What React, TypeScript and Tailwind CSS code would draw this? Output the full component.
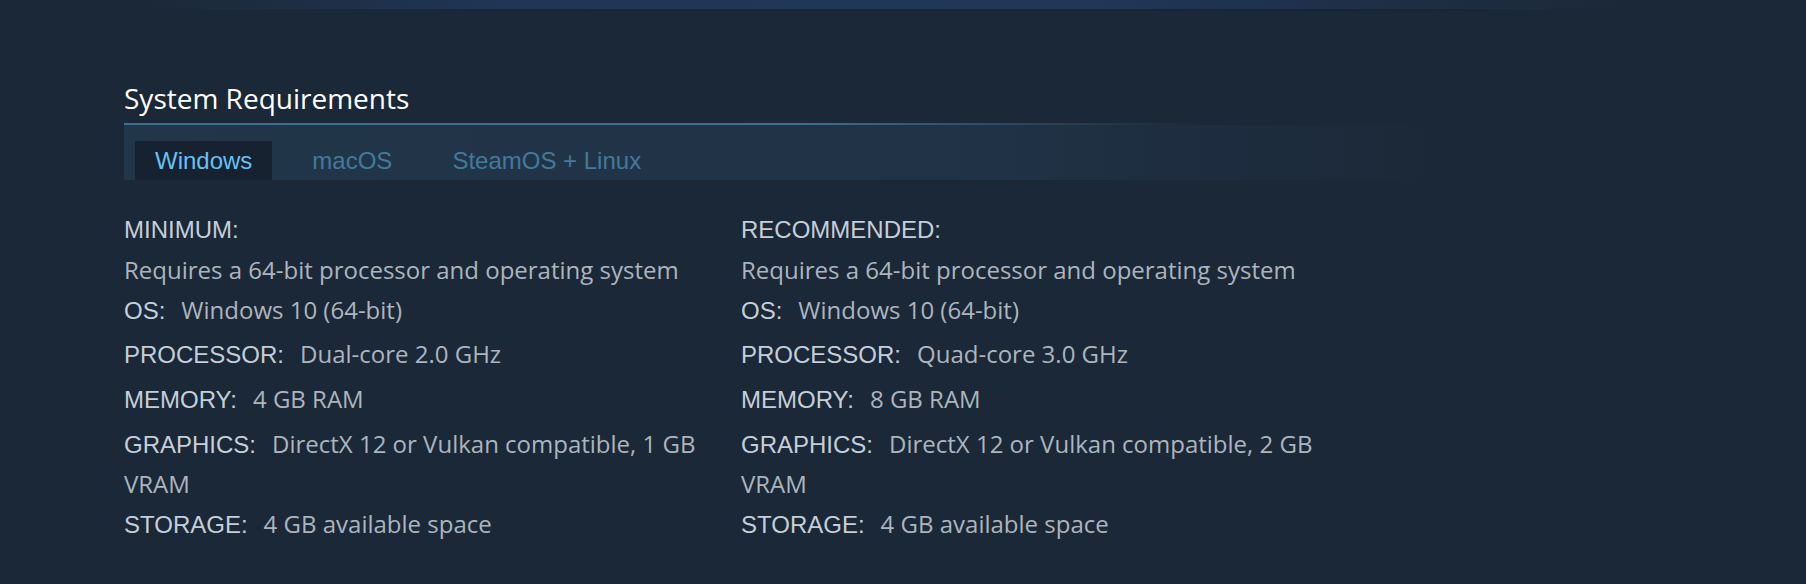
import React from "react";

const Label = ({ children }: { children: React.ReactNode }) => (
  <span className="font-['Liberation_Sans',Arial,sans-serif] text-[24px] leading-[24px] text-[#c4cfd9] mr-[16px]">
    {children}
  </span>
);

function Column({
  heading,
  specs,
}: {
  heading: string;
  specs: { os: string; cpu: string; mem: string; gpu: string; storage: string };
}) {
  return (
    <div className="font-['Open_Sans',sans-serif] text-[24px] leading-[40px] text-[#acb5be]">
      <div className="h-[40px]">
        <span className="font-['Liberation_Sans',Arial,sans-serif] text-[24px] leading-[24px] text-[#c4cfd9]">
          {heading}
        </span>
      </div>
      <div className="mt-[1px]">
        Requires a 64-bit processor and operating system
        <br />
        <Label>OS:</Label>
        {specs.os}
      </div>
      <div className="mt-[4px]">
        <Label>PROCESSOR:</Label>
        {specs.cpu}
      </div>
      <div className="mt-[5px]">
        <Label>MEMORY:</Label>
        {specs.mem}
      </div>
      <div className="mt-[5px]">
        <Label>GRAPHICS:</Label>
        {specs.gpu}
      </div>
      <div>
        <Label>STORAGE:</Label>
        {specs.storage}
      </div>
    </div>
  );
}

export default function App() {
  return (
    <div className="w-[1806px] h-[584px] bg-[#1b2838] overflow-hidden">
      <div className="h-[9px] bg-[linear-gradient(to_right,rgba(32,54,84,0)_8%,#203654_28%,#213756_60%,rgba(32,54,84,0)_90%)]" />
      <div className="h-[2px] bg-[linear-gradient(to_right,rgba(22,32,46,0)_22%,#172432_35%,#172432_75%,rgba(22,32,46,0)_85%)]" />
      <div className="pl-[124px] pt-[70px]">
        <div className="w-[1316px]">
          <h2 className="font-['Open_Sans',sans-serif] text-[28px] leading-[34px] text-white font-normal">
            System Requirements
          </h2>
          <div className="mt-[8px] h-[2px] bg-[linear-gradient(to_right,#3d6f90_0%,#3d6f90_51%,rgba(61,111,144,0)_82%)]" />
          <div className="h-[55px] pt-[16px] pl-[11px] flex items-start gap-[20px] bg-[linear-gradient(to_right,#223649_0%,#203246_65%,rgba(30,46,64,0.6)_88%,rgba(27,40,56,0)_100%)] font-['Liberation_Sans',Arial,sans-serif] text-[24px]">
            <div className="h-[39px] leading-[39px] px-[20px] bg-[#172230] text-[#66c0f4]">Windows</div>
            <div className="h-[39px] leading-[39px] px-[20px] text-[#417a9b]">macOS</div>
            <div className="h-[39px] leading-[39px] px-[20px] text-[#417a9b]">SteamOS + Linux</div>
          </div>
          <div className="mt-[29px] grid grid-cols-[600px_600px] gap-x-[17px]">
            <Column
              heading="MINIMUM:"
              specs={{
                os: "Windows 10 (64-bit)",
                cpu: "Dual-core 2.0 GHz",
                mem: "4 GB RAM",
                gpu: "DirectX 12 or Vulkan compatible, 1 GB VRAM",
                storage: "4 GB available space",
              }}
            />
            <Column
              heading="RECOMMENDED:"
              specs={{
                os: "Windows 10 (64-bit)",
                cpu: "Quad-core 3.0 GHz",
                mem: "8 GB RAM",
                gpu: "DirectX 12 or Vulkan compatible, 2 GB VRAM",
                storage: "4 GB available space",
              }}
            />
          </div>
        </div>
      </div>
    </div>
  );
}
